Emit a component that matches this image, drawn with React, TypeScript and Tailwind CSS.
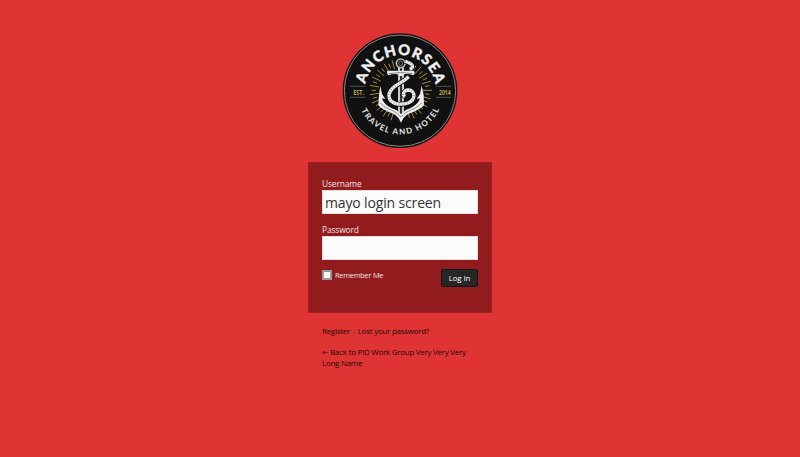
import React from "react";

const RAY_ANGLES = [
  -58, -49, -41, -33, -25, -17, -9, 0, 8, 16, 24, 32, 40, 48, 56, 64, 72,
  108, 116, 124, 132, 140, 148, 156, 164, 172, 180, 189, 197, 205, 213, 221, 229, 238, 246, 254,
];

function Rays() {
  return (
    <g stroke="#a58b3c" strokeWidth="3">
      {RAY_ANGLES.map((deg, i) => {
        const a = (deg * Math.PI) / 180;
        const inner = i % 2 ? 66 : 74;
        const outer = i % 2 ? 94 : 87;
        return (
          <line
            key={deg}
            x1={182 + inner * Math.cos(a)}
            y1={181 + inner * Math.sin(a)}
            x2={182 + outer * Math.cos(a)}
            y2={181 + outer * Math.sin(a)}
          />
        );
      })}
    </g>
  );
}

const UPPER_ROPE = "M195 94C206 99 215 99 217 107C219 112 216 116 209 117";
const LOWER_ROPE =
  "M206 140 C190 158 147 170 147 196 C147 224 182 226 204 219 C229 209 226 180 205 180 C191 181 186 193 195 200";

function Rope({ d }: { d: string }) {
  return (
    <g fill="none">
      <path d={d} stroke="#111" strokeWidth="15" />
      <path d={d} stroke="#f3f3f3" strokeWidth="10" />
      <path d={d} stroke="#999" strokeWidth="9" strokeDasharray="2 6" />
    </g>
  );
}

function Logo() {
  return (
    <svg className="h-[120px] w-[120px]" viewBox="0 0 360 360" aria-label="Anchorsea Travel and Hotel">
      <defs>
        <path id="top-arc" d="M74 182 A107 107 0 0 1 288 182" />
        <path id="bottom-arc" d="M50 183 A130 130 0 0 0 310 183" />
      </defs>
      <circle cx="180" cy="182" r="172" fill="#111" />
      <circle cx="180" cy="182" r="167" fill="none" stroke="#b5b1b1" strokeWidth="2.2" />
      <Rays />
      <path d="M30 169H76M30 202H76M288 169H333M288 202H333" stroke="#77736a" strokeWidth="2" />
      <g fill="#c0a44e" fontFamily="'Open Sans', sans-serif" fontWeight="700" fontSize="22">
        <text x="40" y="194" textLength="32" lengthAdjust="spacingAndGlyphs">EST.</text>
        <text x="297" y="194" textLength="35" lengthAdjust="spacingAndGlyphs">2014</text>
      </g>
      <text fill="#f1f1f1" stroke="#f1f1f1" strokeWidth="1" fontFamily="Lato, sans-serif" fontWeight="900" fontSize="44">
        <textPath href="#top-arc" startOffset="20" textLength="297" lengthAdjust="spacing">ANCHORSEA</textPath>
      </text>
      <text fill="#e8e8e8" fontFamily="Lato, sans-serif" fontWeight="700" fontSize="24">
        <textPath href="#bottom-arc" startOffset="60" textLength="291" lengthAdjust="spacing">TRAVEL AND HOTEL</textPath>
      </text>
      <g fill="none" stroke="#f0f0f0">
        <circle cx="182" cy="100" r="13" strokeWidth="5" stroke="#bcbcbc" />
        <circle cx="182" cy="100" r="6" strokeWidth="3" stroke="#777" />
        <path d="M177 114V248M189 114V248" strokeWidth="5" />
        <path d="M183 120V250" strokeWidth="4" stroke="#444" />
      </g>
      <Rope d={LOWER_ROPE} />
      <Rope d={UPPER_ROPE} />
      <path d="M142 122H222Q227 129 221 136Q202 129 188 134V138H177V134Q162 129 145 136Q138 129 142 122Z" fill="#e8e8e8" />
      <path d="M146 131Q182 124 218 131" fill="none" stroke="#555" strokeWidth="2" />
      <path
        d="M121 167L126 192L136 207L126 205C132 226 153 234 170 241L183 252L196 241C213 234 234 226 240 205L230 207L240 192L245 167L251 194L252 226C235 243 213 247 200 255Q188 263 183 278Q178 263 166 255C153 247 131 243 115 226L117 194Z"
        fill="#f0f0f0"
      />
      <path
        d="M121 218C134 236 154 238 168 248L183 261L198 248C212 238 232 236 245 218"
        fill="none"
        stroke="#555"
        strokeWidth="2"
      />
    </svg>
  );
}

export default function App() {
  return (
    <main className="flex h-[457px] w-full flex-col items-center overflow-hidden bg-[#e03434] pt-[30px] font-['Open_Sans','DejaVu_Sans',sans-serif]">
      <Logo />
      <form
        className="mt-3 h-[151px] w-[184px] shrink-0 border border-[#a01f21] bg-[#911b1d] px-[13px] pt-[15px]"
        onSubmit={(e) => e.preventDefault()}
      >
        <label className="block text-[8.4px] leading-[12px] tracking-[-0.12px] text-[#f3e2e2]">
          Username
          <input
            className="block h-6 w-full border border-[#ddd] bg-[#fbfbfb] px-[2px] text-[14px] leading-5 tracking-[-0.15px] text-[#333] outline-none"
            defaultValue="mayo login screen"
          />
        </label>
        <label className="mt-[10px] block text-[8.4px] leading-[12px] tracking-[-0.12px] text-[#f3e2e2]">
          Password
          <input type="password" className="block h-6 w-full border border-[#ddd] bg-[#fbfbfb] px-[2px] outline-none" />
        </label>
        <div className="mt-2 flex items-start justify-between">
          <label className="flex items-center gap-[3px] pt-[2px] text-[7.4px] leading-[10px] tracking-[-0.25px] text-[#f3e2e2]">
            <input type="checkbox" className="h-[10px] w-[10px] appearance-none border-2 border-[#999] bg-white" />
            Remember Me
          </label>
          <button className="mt-px h-[18px] w-[37px] rounded-[2px] border border-[#151515] bg-[#262626] text-[7.8px] leading-[16px] tracking-[-0.1px] text-white">
            Log In
          </button>
        </div>
      </form>
      <nav className="mt-[13px] w-[156px] text-[7.9px] leading-[11px] tracking-[-0.22px] text-[#1c0606]">
        <p>
          <a href="#register">Register</a> <span className="text-[#8a3838]">|</span>{" "}
          <a href="#lost">Lost your password?</a>
        </p>
        <p className="mt-[10px] pr-1">
          <a href="#back">← Back to PID Work Group Very Very Very Long Name</a>
        </p>
      </nav>
    </main>
  );
}
